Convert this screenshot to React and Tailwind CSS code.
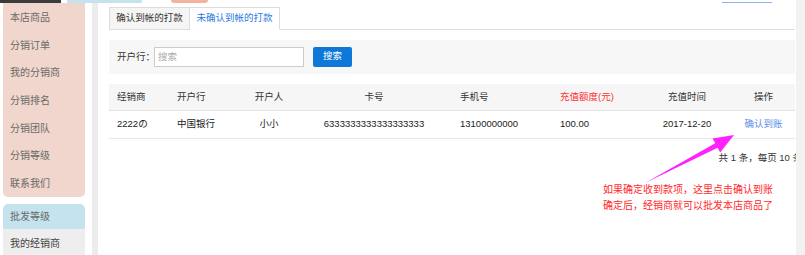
const font = { fontFamily: "'Liberation Sans', 'Noto Sans CJK SC', sans-serif" }

const menu = ['本店商品', '分销订单', '我的分销商', '分销排名', '分销团队', '分销等级', '联系我们']

const Sidebar = () => (
  <div className="ml-[3px] w-[82px] shrink-0 flex flex-col">
    <div className="bg-[#f0d6cc] rounded-b-[5px] flex flex-col pt-[1px]">
      {menu.map((m) => (
        <div key={m} className="h-[27.6px] flex items-center pl-[7px] text-[10px] text-[#6a6a6a]">
          {m}
        </div>
      ))}
    </div>
    <div className="mt-[7px] h-[28px] bg-[#c4e3ee] rounded-t-[5px] flex items-center pl-[7px] text-[10px] text-[#6a6a6a]">
      批发等级
    </div>
    <div className="h-[30px] bg-[#eeeeee] flex items-center pl-[7px] pt-[3px] text-[10px] text-[#444]">
      我的经销商
    </div>
  </div>
)

const Tabs = () => (
  <div className="mt-[4px] flex border-b border-[#dddddd] h-[23px]">
    <div className="w-[81px] h-[23px] bg-[#f5f5f5] border border-[#dddddd] flex items-center justify-center text-[9.5px] text-[#333]">
      确认到帐的打款
    </div>
    <div className="w-[90px] h-[23px] bg-white border border-l-0 border-b-white border-[#dddddd] flex items-center justify-center text-[9.5px] text-[#2a7ae2]">
      未确认到帐的打款
    </div>
  </div>
)

const SearchBar = () => (
  <div className="mt-[10px] h-[34px] bg-[#f7f7f7] flex items-center pl-[8px]">
    <span className="text-[9.5px] text-[#333]">开户行：</span>
    <div className="ml-[-1px] w-[150px] h-[20px] bg-white border border-[#cccccc] flex items-center pl-[3px] text-[9.5px] text-[#aaaaaa]">
      搜索
    </div>
    <button className="ml-[9px] -mt-[1px] w-[39px] h-[20px] bg-[#0d78d8] rounded-[2px] text-white text-[9.5px] flex items-center justify-center">
      搜索
    </button>
  </div>
)

const cols = 'grid grid-cols-[60px_60px_80px_130px_113px_90px_90px_63px]'

const Table = () => (
  <div className="mt-[10px] text-[9.5px]">
    <div className={`${cols} h-[27px] bg-[#f6f6f6] border-b border-[#e3e3e3] items-center text-[#333]`}>
      <div className="pl-[8px]">经销商</div>
      <div className="pl-[8px]">开户行</div>
      <div className="text-center">开户人</div>
      <div className="text-center">卡号</div>
      <div className="pl-[21px]">手机号</div>
      <div className="pl-[8px] text-[#ff3030]">充值额度(元)</div>
      <div className="text-center">充值时间</div>
      <div className="text-center">操作</div>
    </div>
    <div className={`${cols} h-[28px] border-b border-[#e8e8e8] items-center text-[#222]`}>
      <div className="pl-[8px]">2222の</div>
      <div className="pl-[8px]">中国银行</div>
      <div className="text-center">小小</div>
      <div className="text-center">6333333333333333333</div>
      <div className="pl-[21px]">13100000000</div>
      <div className="pl-[8px]">100.00</div>
      <div className="text-center">2017-12-20</div>
      <div className="text-center text-[#5a8ee8]">确认到账</div>
    </div>
    <div className="mt-[12px] flex justify-end mr-[-7px] text-[9.5px] text-[#333] whitespace-nowrap">
      共 1 条，每页 10 条
    </div>
  </div>
)

export default function App() {
  return (
    <div className="relative w-[805px] h-[255px] bg-white overflow-hidden" style={font}>
      {/* top strip of the cut-off header */}
      <div className="h-[3px] flex">
        <div className="w-[61px] bg-[#3b3b3b]" />
        <div className="ml-[6px] w-[75px] bg-[#c4e3ee]" />
        <div className="ml-[29px] w-[37px] bg-[#f4b39f] rounded-b-[4px]" />
        <div className="ml-[514px] w-[50px] relative">
          <div className="absolute left-0 right-0 bottom-0 h-[1px] bg-[#8ab4ec]" />
        </div>
        <div className="ml-[24px] flex-1 bg-[#f2f2f2]" />
      </div>

      <div className="flex h-[252px]">
        <Sidebar />
        <div className="ml-[7px] w-[6px] bg-[#ececec] shrink-0" />
        <div className="w-[698px] shrink-0 pl-[11px] pr-[1px] overflow-hidden">
          <Tabs />
          <SearchBar />
          <Table />
        </div>
        <div className="flex-1 bg-[#f2f2f2]" />
      </div>

      {/* annotation overlay */}
      <svg className="absolute left-0 top-0 pointer-events-none" width="805" height="255">
        <polygon
          points="645,183 715.2,143.3 712.6,138.5 734,135 720.2,152.5 717.6,147.7"
          fill="#ff22ff"
        />
      </svg>
      <div className="absolute left-[603px] top-[182px] text-[10px] leading-[16px] text-[#ff2a2a]">
        <div>如果确定收到款项，这里点击确认到账</div>
        <div>确定后，经销商就可以批发本店商品了</div>
      </div>
    </div>
  )
}
